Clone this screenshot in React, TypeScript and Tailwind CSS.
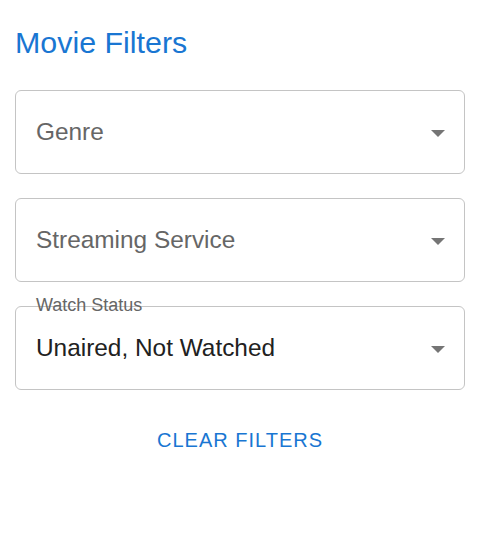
import React from "react";

function Arrow() {
  return (
    <svg width="14" height="7" viewBox="0 0 14 7" className="ml-auto mr-[19px] mt-[2px] shrink-0">
      <polygon points="0,0 14,0 7,7" fill="#757575" />
    </svg>
  );
}

function SelectBox({ text, placeholder, label }: { text: string; placeholder?: boolean; label?: string }) {
  return (
    <div className="relative flex h-[84px] items-center rounded-[6px] border border-[#c4c4c4] pl-[20px]">
      {label && (
        <span className="absolute left-[20px] top-[-11px] text-[18px] leading-[18px] text-[#666666]">{label}</span>
      )}
      <span className={`text-[24.4px] leading-[34px] ${placeholder ? "text-[#666666]" : "text-[#212121]"}`}>{text}</span>
      <Arrow />
    </div>
  );
}

export default function App() {
  return (
    <div
      className="w-[478px] h-[534px] bg-white px-[15px] pt-[24px]"
      style={{ fontFamily: '"Liberation Sans", Arial, sans-serif' }}
    >
      <h1 className="text-[30.4px] leading-[36px] font-normal text-[#1976d2]">Movie Filters</h1>
      <div className="mt-[30px] flex w-[450px] flex-col gap-[24px]">
        <SelectBox text="Genre" placeholder />
        <SelectBox text="Streaming Service" placeholder />
        <SelectBox text="Unaired, Not Watched" label="Watch Status" />
      </div>
      <div className="mt-[38px] w-[450px] text-center text-[20px] leading-[24px] tracking-[1px] text-[#1976d2]">
        CLEAR FILTERS
      </div>
    </div>
  );
}
